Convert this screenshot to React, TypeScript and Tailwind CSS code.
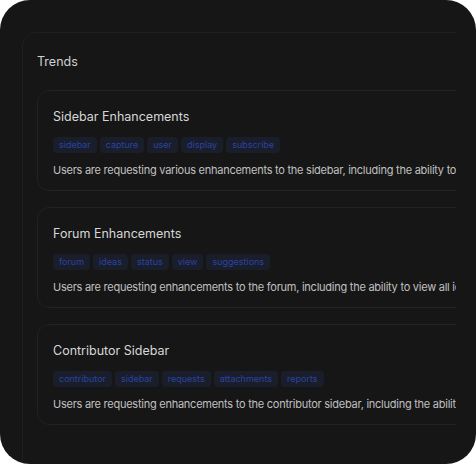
const trends = [
  {
    title: "Sidebar Enhancements",
    tags: ["sidebar", "capture", "user", "display", "subscribe"],
    summary:
      "Users are requesting various enhancements to the sidebar, including the ability to customize what is shown.",
  },
  {
    title: "Forum Enhancements",
    tags: ["forum", "ideas", "status", "view", "suggestions"],
    summary:
      "Users are requesting enhancements to the forum, including the ability to view all ideas by status.",
  },
  {
    title: "Contributor Sidebar",
    tags: ["contributor", "sidebar", "requests", "attachments", "reports"],
    summary:
      "Users are requesting enhancements to the contributor sidebar, including the ability to see past requests.",
  },
];

function TrendCard({ title, tags, summary }: { title: string; tags: string[]; summary: string }) {
  return (
    <div className="rounded-xl border border-[#222222] px-[15px] pt-[16px] pb-[12px]">
      <h3 className="text-[12.5px] leading-[20px] text-[#d6d6d6]">{title}</h3>
      <div className="mt-[10px] flex gap-[3px]">
        {tags.map((tag) => (
          <span
            key={tag}
            className="rounded-[4px] bg-[#1a1e2a] px-[6px] text-[9px] leading-[16px] text-[#2a43a3]"
          >
            {tag}
          </span>
        ))}
      </div>
      <p className="mt-[9px] whitespace-nowrap text-[11px] leading-[16px] tracking-[-0.25px] text-[#c0c0c0]">
        {summary}
      </p>
    </div>
  );
}

export default function App() {
  return (
    <div className="h-[464px] w-[476px] bg-white" style={{ fontFamily: "Inter, 'Noto Sans', sans-serif" }}>
      <div className="h-full w-full overflow-hidden rounded-[30px] bg-[#161616]">
        <div className="h-full w-[456px] overflow-hidden pl-[22px] pt-[32px]">
          <div className="h-[480px] w-[520px] rounded-[14px] border border-[#1f1f1f] px-[14px] pt-[19px]">
            <div className="text-[12.5px] leading-[20px] text-[#d0d0d0]">Trends</div>
            <div className="mt-[18px] flex flex-col gap-4">
              {trends.map((t) => (
                <TrendCard key={t.title} {...t} />
              ))}
            </div>
          </div>
        </div>
      </div>
    </div>
  );
}
